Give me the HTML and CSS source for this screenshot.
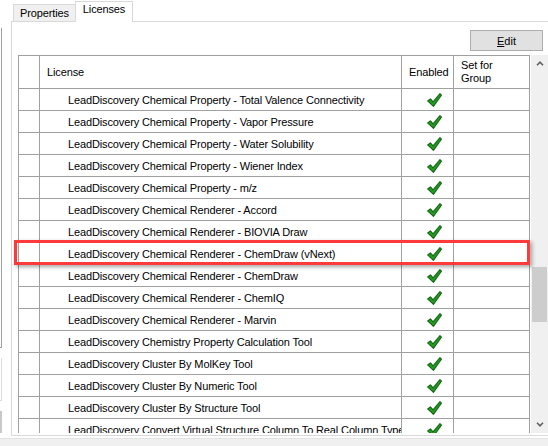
FILE: index.html
```html
<!DOCTYPE html>
<html lang="en">
<head>
  <meta charset="UTF-8" />
  <title>Licenses</title>
  <link rel="stylesheet" href="styles.css">
</head>
<body>

<div class="window">
  <div class="top">

    <!-- left neighbour pane (only its edge is visible) -->
    <div class="side">
      <div class="side-box"></div>
      <div class="side-box light"></div>
      <div class="side-box filled"></div>
    </div>

    <div class="tabs">
      <div class="tab-strip">
        <div class="tab">Properties</div>
        <div class="tab active">Licenses</div>
      </div>

      <div class="panel">
        <div class="toolbar">
          <button class="btn"><u>E</u>dit</button>
        </div>

        <div class="grid">
          <div class="table">
            <div class="row head">
              <div class="cell"></div>
              <div class="cell name">License</div>
              <div class="cell hcol">Enabled</div>
              <div class="cell hcol">Set for<br>Group</div>
            </div>

            <div class="row"><div class="cell"></div><div class="cell name item">LeadDiscovery Chemical Property - Total Valence Connectivity</div><div class="cell check"><svg viewBox="0 0 14 13"><path d="M0.6 7.4 L3.2 5.4 L5.6 8.2 L12.1 0.6 L13.5 1.9 L6 12.4 Z"/></svg></div><div class="cell"></div></div>
            <div class="row"><div class="cell"></div><div class="cell name item">LeadDiscovery Chemical Property - Vapor Pressure</div><div class="cell check"><svg viewBox="0 0 14 13"><path d="M0.6 7.4 L3.2 5.4 L5.6 8.2 L12.1 0.6 L13.5 1.9 L6 12.4 Z"/></svg></div><div class="cell"></div></div>
            <div class="row"><div class="cell"></div><div class="cell name item">LeadDiscovery Chemical Property - Water Solubility</div><div class="cell check"><svg viewBox="0 0 14 13"><path d="M0.6 7.4 L3.2 5.4 L5.6 8.2 L12.1 0.6 L13.5 1.9 L6 12.4 Z"/></svg></div><div class="cell"></div></div>
            <div class="row"><div class="cell"></div><div class="cell name item">LeadDiscovery Chemical Property - Wiener Index</div><div class="cell check"><svg viewBox="0 0 14 13"><path d="M0.6 7.4 L3.2 5.4 L5.6 8.2 L12.1 0.6 L13.5 1.9 L6 12.4 Z"/></svg></div><div class="cell"></div></div>
            <div class="row"><div class="cell"></div><div class="cell name item">LeadDiscovery Chemical Property - m/z</div><div class="cell check"><svg viewBox="0 0 14 13"><path d="M0.6 7.4 L3.2 5.4 L5.6 8.2 L12.1 0.6 L13.5 1.9 L6 12.4 Z"/></svg></div><div class="cell"></div></div>
            <div class="row"><div class="cell"></div><div class="cell name item">LeadDiscovery Chemical Renderer - Accord</div><div class="cell check"><svg viewBox="0 0 14 13"><path d="M0.6 7.4 L3.2 5.4 L5.6 8.2 L12.1 0.6 L13.5 1.9 L6 12.4 Z"/></svg></div><div class="cell"></div></div>
            <div class="row"><div class="cell"></div><div class="cell name item">LeadDiscovery Chemical Renderer - BIOVIA Draw</div><div class="cell check"><svg viewBox="0 0 14 13"><path d="M0.6 7.4 L3.2 5.4 L5.6 8.2 L12.1 0.6 L13.5 1.9 L6 12.4 Z"/></svg></div><div class="cell"></div></div>
            <div class="row"><div class="cell"></div><div class="cell name item">LeadDiscovery Chemical Renderer - ChemDraw (vNext)</div><div class="cell check"><svg viewBox="0 0 14 13"><path d="M0.6 7.4 L3.2 5.4 L5.6 8.2 L12.1 0.6 L13.5 1.9 L6 12.4 Z"/></svg></div><div class="cell"></div></div>
            <div class="row"><div class="cell"></div><div class="cell name item">LeadDiscovery Chemical Renderer - ChemDraw</div><div class="cell check"><svg viewBox="0 0 14 13"><path d="M0.6 7.4 L3.2 5.4 L5.6 8.2 L12.1 0.6 L13.5 1.9 L6 12.4 Z"/></svg></div><div class="cell"></div></div>
            <div class="row"><div class="cell"></div><div class="cell name item">LeadDiscovery Chemical Renderer - ChemIQ</div><div class="cell check"><svg viewBox="0 0 14 13"><path d="M0.6 7.4 L3.2 5.4 L5.6 8.2 L12.1 0.6 L13.5 1.9 L6 12.4 Z"/></svg></div><div class="cell"></div></div>
            <div class="row"><div class="cell"></div><div class="cell name item">LeadDiscovery Chemical Renderer - Marvin</div><div class="cell check"><svg viewBox="0 0 14 13"><path d="M0.6 7.4 L3.2 5.4 L5.6 8.2 L12.1 0.6 L13.5 1.9 L6 12.4 Z"/></svg></div><div class="cell"></div></div>
            <div class="row"><div class="cell"></div><div class="cell name item">LeadDiscovery Chemistry Property Calculation Tool</div><div class="cell check"><svg viewBox="0 0 14 13"><path d="M0.6 7.4 L3.2 5.4 L5.6 8.2 L12.1 0.6 L13.5 1.9 L6 12.4 Z"/></svg></div><div class="cell"></div></div>
            <div class="row"><div class="cell"></div><div class="cell name item">LeadDiscovery Cluster By MolKey Tool</div><div class="cell check"><svg viewBox="0 0 14 13"><path d="M0.6 7.4 L3.2 5.4 L5.6 8.2 L12.1 0.6 L13.5 1.9 L6 12.4 Z"/></svg></div><div class="cell"></div></div>
            <div class="row"><div class="cell"></div><div class="cell name item">LeadDiscovery Cluster By Numeric Tool</div><div class="cell check"><svg viewBox="0 0 14 13"><path d="M0.6 7.4 L3.2 5.4 L5.6 8.2 L12.1 0.6 L13.5 1.9 L6 12.4 Z"/></svg></div><div class="cell"></div></div>
            <div class="row"><div class="cell"></div><div class="cell name item">LeadDiscovery Cluster By Structure Tool</div><div class="cell check"><svg viewBox="0 0 14 13"><path d="M0.6 7.4 L3.2 5.4 L5.6 8.2 L12.1 0.6 L13.5 1.9 L6 12.4 Z"/></svg></div><div class="cell"></div></div>
            <div class="row"><div class="cell"></div><div class="cell name item">LeadDiscovery Convert Virtual Structure Column To Real Column Type</div><div class="cell check"><svg viewBox="0 0 14 13"><path d="M0.6 7.4 L3.2 5.4 L5.6 8.2 L12.1 0.6 L13.5 1.9 L6 12.4 Z"/></svg></div><div class="cell"></div></div>
          </div>

          <!-- vertical scrollbar -->
          <div class="scroll">
            <div class="arrow"><svg viewBox="0 0 8 5"><path d="M1 4.2 L4 1.2 L7 4.2"/></svg></div>
            <div class="track"><div class="thumb"></div></div>
            <div class="arrow"><svg viewBox="0 0 8 5"><path d="M1 0.8 L4 3.8 L7 0.8"/></svg></div>
          </div>

          <!-- red callout around the vNext row -->
          <div class="mark"></div>
        </div>
      </div>
    </div>
  </div>

  <div class="status"></div>
</div>

</body>
</html>
```

FILE: styles.css
```css
* {
  box-sizing: border-box;
  margin: 0;
  padding: 0;
}
body {
  font-family: "Liberation Sans", Arial, sans-serif;
  font-size: 11px;
  letter-spacing: -0.13px;
  color: #000;
  background-color: #fff;
  width: 548px;
  height: 446px;
  overflow: hidden;
}

.window {
  display: flex;
  flex-direction: column;
  height: 446px;
}
.top {
  display: flex;
  height: 438px;
}

/* LEFT PANE EDGE */
.side {
  width: 11px;
  display: flex;
  flex-direction: column;
}
.side-box {
  width: 2px;
  height: 320px;
  margin-top: 28px;
  border-right: 1px solid #a0a0a0;
  border-bottom: 1px solid #a0a0a0;
}
.side-box.light {
  height: 43px;
  margin-top: 10px;
  border-color: #dcdcdc;
}
.side-box.filled {
  height: 22px;
  margin-top: 10px;
  border: none;
  background-color: #c8c8c8;
}

/* TABS */
.tabs {
  flex: 1;
  display: flex;
  flex-direction: column;
}
.tab-strip {
  height: 21px;
  display: flex;
  align-items: flex-end;
  padding-left: 2px;
}
.tab {
  height: 17px;
  padding: 2px 6px 0 6px;
  background-color: #f0f0f0;
  border: 1px solid #d9d9d9;
  border-bottom: none;
  line-height: 13px;
}
.tab.active {
  position: relative;
  z-index: 1;
  height: 21px;
  margin-left: -1px;
  margin-bottom: -1px;
  padding: 1px 7px 0 7px;
  background-color: #fff;
}

.panel {
  height: 415px;
  border-top: 1px solid #d9d9d9;
  border-left: 1px solid #d9d9d9;
  border-bottom: 1px solid #d9d9d9;
  background-color: #fff;
  padding: 0 0 0 6px;
}

.toolbar {
  display: flex;
  justify-content: flex-end;
  padding: 8px 5px 0 0;
}
.btn {
  width: 73px;
  height: 21px;
  background-color: #e1e1e1;
  border: 1px solid #adadad;
  font-family: inherit;
  font-size: 11px;
  color: #000;
  padding-top: 1px;
}

/* GRID */
.grid {
  position: relative;
  display: flex;
  height: 378px;
  margin-top: 4px;
}
.table {
  width: 512px;
  height: 378px;
  overflow: hidden;
}
.row {
  display: grid;
  grid-template-columns: 21px 362px 52px 77px;
  height: 22px;
  border-bottom: 1px solid #a0a0a0;
}
.row.head {
  height: 34px;
  border-top: 1px solid #a0a0a0;
}
.cell {
  border-left: 1px solid #a0a0a0;
  display: flex;
  align-items: center;
  white-space: nowrap;
  overflow: hidden;
}
.cell:last-child {
  border-right: 1px solid #a0a0a0;
}
.name {
  padding-left: 7px;
}
.name.item {
  padding-left: 28px;
}
.hcol {
  padding-left: 7px;
  line-height: 13px;
}
.check {
  padding-left: 25px;
}
.check svg {
  width: 15px;
  height: 14px;
}
.check path {
  fill: #259a25;
  stroke: #136813;
  stroke-width: 1;
  stroke-linejoin: round;
}

/* SCROLLBAR */
.scroll {
  width: 17px;
  margin-left: 1px;
  background-color: #f0f0f0;
  display: flex;
  flex-direction: column;
}
.arrow {
  height: 17px;
  display: flex;
  align-items: center;
  justify-content: center;
}
.arrow svg {
  width: 8px;
  height: 5px;
}
.arrow path {
  fill: none;
  stroke: #606060;
  stroke-width: 1.6;
}
.track {
  flex: 1;
  padding: 0 1px;
}
.thumb {
  margin-top: 195px;
  height: 55px;
  background-color: #cdcdcd;
}

/* HIGHLIGHT */
.mark {
  position: absolute;
  left: -4px;
  top: 185px;
  width: 516px;
  height: 25px;
  border: 3px solid #ff3a3a;
  box-shadow: 2px 2px 4px rgba(0, 0, 0, 0.35);
}

.status {
  flex: 1;
  background-color: #f0f0f0;
  border-top: 1px solid #e3e3e3;
}
```
